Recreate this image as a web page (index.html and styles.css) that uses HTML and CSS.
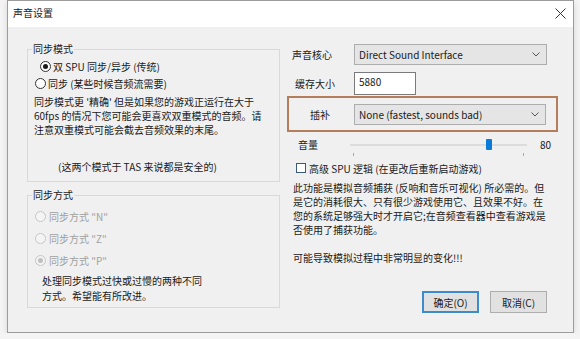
FILE: index.html
```html
<!DOCTYPE html>
<html>
<head>
    <meta charset="utf-8">
    <title>声音设置</title>
    <link rel="stylesheet" href="styles.css">
</head>
<body>
    <div class="window">
        <div class="titlebar">
            <span class="title">声音设置</span>
            <svg class="close" width="11" height="11" viewBox="0 0 11 11"><path d="M0.5 0.5L10.5 10.5M10.5 0.5L0.5 10.5" stroke="#333" stroke-width="1"/></svg>
        </div>
        <div class="dlg-body">
            <div class="left-col">
                <fieldset class="group group-mode">
                    <legend>同步模式</legend>
                    <div class="radio radio-first"><span class="dot checked"></span>双 SPU 同步/异步 (传统)</div>
                    <div class="radio radio-second"><span class="dot"></span>同步 (某些时候音频流需要)</div>
                    <p class="note">同步模式更 '精确' 但是如果您的游戏正运行在大于<br>60fps 的情况下您可能会更喜欢双重模式的音频。请<br>注意双重模式可能会截去音频效果的末尾。</p>
                    <p class="safe">(这两个模式于 TAS 来说都是安全的)</p>
                </fieldset>
                <fieldset class="group group-method">
                    <legend>同步方式</legend>
                    <div class="radio disabled"><span class="dot"></span>同步方式 "N"</div>
                    <div class="radio disabled"><span class="dot"></span>同步方式 "Z"</div>
                    <div class="radio disabled"><span class="dot checked"></span>同步方式 "P"</div>
                    <p class="method-note">处理同步模式过快或过慢的两种不同<br>方式。希望能有所改进。</p>
                </fieldset>
            </div>
            <div class="right-col">
                <div class="row row-core">
                    <span class="label">声音核心</span>
                    <div class="combo">
                        <span>Direct Sound Interface</span>
                        <svg width="8" height="5" viewBox="0 0 8 5"><polyline points="0.5,0.5 4,4 7.5,0.5" fill="none" stroke="#555" stroke-width="1"/></svg>
                    </div>
                </div>
                <div class="row row-buffer">
                    <span class="label">缓存大小</span>
                    <div class="textbox">5880</div>
                </div>
                <div class="row row-interp">
                    <span class="label">插补</span>
                    <div class="combo combo-interp">
                        <span>None (fastest, sounds bad)</span>
                        <svg width="8" height="5" viewBox="0 0 8 5"><polyline points="0.5,0.5 4,4 7.5,0.5" fill="none" stroke="#555" stroke-width="1"/></svg>
                    </div>
                </div>
                <div class="row row-volume">
                    <span class="label">音量</span>
                    <div class="slider">
                        <div class="track">
                            <span class="thumb" style="margin-left: 136px"></span>
                        </div>
                        <div class="ticks"><span></span><span></span></div>
                    </div>
                    <span class="value">80</span>
                </div>
                <div class="check-row">
                    <span class="checkbox"></span>高级 SPU 逻辑 (在更改后重新启动游戏)
                </div>
                <p class="info">此功能是模拟音频捕获 (反响和音乐可视化) 所必需的。但<br>是它的消耗很大、只有很少游戏使用它、且效果不好。在<br>您的系统足够强大时才开启它;在音频查看器中查看游戏是<br>否使用了捕获功能。<br><br>可能导致模拟过程中非常明显的变化!!!</p>
                <div class="buttons">
                    <button class="btn btn-default">确定(O)</button>
                    <button class="btn">取消(C)</button>
                </div>
            </div>
        </div>
    </div>
</body>
</html>
```

FILE: styles.css
```css
body {
    margin: 0;
    background: #f4f4f4;
    font-family: "Noto Sans CJK SC", "Noto Sans", sans-serif;
    font-size: 10px;
    color: #1a1a1a;
}
.window {
    margin-left: 7px;
    width: 567px;
    height: 333px;
    box-sizing: border-box;
    border: 1px solid #9c9c9c;
    background: #f0f0f0;
    box-shadow: 0 2px 6px rgba(0, 0, 0, 0.12);
}
.titlebar {
    height: 26px;
    box-sizing: border-box;
    background: #fff;
    display: flex;
    align-items: center;
    justify-content: space-between;
    padding: 0 7px 2px 5px;
}
.title {
    line-height: 14px;
}
.dlg-body {
    display: flex;
    height: 305px;
}
.left-col {
    padding: 15px 0 0 19px;
    width: 253px;
}
.group {
    margin: 0;
    min-width: 0;
    border: 1px solid #d9d9d9;
    padding: 2px 6px 7px 6px;
}
.group legend {
    padding: 0 1px;
    margin-left: -2px;
    line-height: 14px;
}
.group-method {
    margin-top: 6px;
    padding: 3px 6px 4px 6px;
}
.radio {
    display: flex;
    align-items: center;
    height: 17px;
}
.radio-first {
    margin-left: 6px;
}
.radio-second {
    margin-left: 1px;
}
.group-method .radio {
    height: 22px;
    margin-left: 1px;
}
.dot {
    width: 11px;
    height: 11px;
    box-sizing: border-box;
    border: 1px solid #333;
    border-radius: 50%;
    background: #fff;
    margin-right: 2px;
    display: flex;
    align-items: center;
    justify-content: center;
}
.dot.checked::after {
    content: "";
    width: 5px;
    height: 5px;
    border-radius: 50%;
    background: #1a1a1a;
}
.radio.disabled {
    color: #a0a0a0;
}
.radio.disabled .dot {
    border-color: #c6c6c6;
    background: #f4f4f4;
    margin-right: 3px;
}
.radio.disabled .dot.checked::after {
    background: #c0c0c0;
}
.note {
    margin: 3px 0 0 0;
    line-height: 14px;
}
.safe {
    margin: 23px 0 0 24px;
    line-height: 14px;
}
.method-note {
    margin: 2px 0 0 8px;
    line-height: 15px;
}
.right-col {
    margin-left: 7px;
    width: 271px;
    display: flex;
    flex-direction: column;
}
.row {
    display: flex;
    align-items: center;
}
.row-core {
    margin-top: 17px;
    height: 21px;
}
.row-core .label {
    margin-left: 5px;
    width: 62px;
}
.combo {
    width: 193px;
    height: 21px;
    box-sizing: border-box;
    border: 1px solid #adadad;
    background: #e5e5e5;
    display: flex;
    align-items: center;
    justify-content: space-between;
    padding: 0 6px 0 4px;
}
.combo-interp {
    width: 192px;
}
.row-buffer {
    margin-top: 7px;
    height: 23px;
}
.row-buffer .label {
    margin-left: 8px;
    width: 59px;
}
.textbox {
    width: 62px;
    height: 23px;
    box-sizing: border-box;
    border: 1px solid #7a7a7a;
    background: #fff;
    padding: 2px 4px;
    line-height: 14px;
}
.row-interp {
    margin-top: 1px;
    width: 271px;
    height: 36px;
    box-sizing: border-box;
    border: 2px solid #b47e5c;
}
.row-interp .label {
    margin-left: 21px;
    width: 44px;
}
.row-volume {
    margin-top: 6px;
    align-items: flex-start;
}
.row-volume .label {
    margin-left: 11px;
    width: 52px;
    line-height: 14px;
}
.slider {
    width: 177px;
}
.track {
    height: 12px;
    display: flex;
    align-items: center;
    background: linear-gradient(#dcdcdc, #dcdcdc) 0 6px / 100% 2px no-repeat;
}
.thumb {
    width: 6px;
    height: 11px;
    border-radius: 1px;
    background: #0a7bd8;
}
.ticks {
    margin-top: 3px;
    display: flex;
    justify-content: space-between;
    padding: 0 3px;
}
.ticks span {
    width: 1px;
    height: 3px;
    background: #a8a8a8;
}
.value {
    margin-left: 13px;
    line-height: 14px;
}
.check-row {
    margin-top: 5px;
    margin-left: 9px;
    display: flex;
    align-items: center;
    height: 14px;
}
.checkbox {
    width: 10px;
    height: 10px;
    box-sizing: border-box;
    border: 1px solid #3c5a78;
    background: #fff;
    margin-right: 3px;
}
.info {
    margin: 6px 0 0 6px;
    line-height: 14px;
}
.buttons {
    margin-top: 26px;
    display: flex;
    justify-content: flex-end;
    gap: 11px;
    padding-right: 11px;
}
.btn {
    width: 57px;
    height: 22px;
    box-sizing: border-box;
    border: 1px solid #adadad;
    background: #e1e1e1;
    font-family: inherit;
    font-size: 10px;
    color: #1a1a1a;
    padding: 0;
}
.btn-default {
    border: 2px solid #3c8ccd;
}
```
